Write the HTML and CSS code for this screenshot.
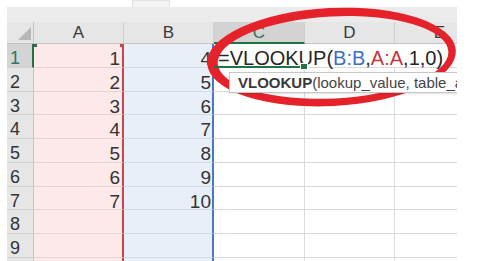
FILE: index.html
```html
<!DOCTYPE html>
<html>
<head>
<meta charset="utf-8">
<link rel="stylesheet" href="styles.css">
</head>
<body>
<div class="tabs"><div class="tab"></div></div>
<div class="sheet">
  <div class="band"></div>
  <div class="grid">
    <div class="hd corner"><span class="tri"></span></div>
    <div class="hd col">A</div>
    <div class="hd col">B</div>
    <div class="hd col sel">C</div>
    <div class="hd col">D</div>
    <div class="hd col">E</div>

    <div class="rh sel">1</div>
    <div class="c a"><span class="mk-dark"></span><span class="mk-red"></span>1</div>
    <div class="c b">4</div>
    <div class="c active"><span class="formula">=VLOOKUP(<span class="rb">B:B</span>,<span class="rr">A:A</span>,1,0)</span><span class="handle"></span></div>
    <div class="c open"></div>
    <div class="c open"></div>

    <div class="rh">2</div><div class="c a">2</div><div class="c b">5</div><div class="c"></div><div class="c"></div><div class="c"></div>
    <div class="rh">3</div><div class="c a">3</div><div class="c b">6</div><div class="c"></div><div class="c"></div><div class="c"></div>
    <div class="rh">4</div><div class="c a">4</div><div class="c b">7</div><div class="c"></div><div class="c"></div><div class="c"></div>
    <div class="rh">5</div><div class="c a">5</div><div class="c b">8</div><div class="c"></div><div class="c"></div><div class="c"></div>
    <div class="rh">6</div><div class="c a">6</div><div class="c b">9</div><div class="c"></div><div class="c"></div><div class="c"></div>
    <div class="rh">7</div><div class="c a">7</div><div class="c b">10</div><div class="c"></div><div class="c"></div><div class="c"></div>
    <div class="rh">8</div><div class="c a"></div><div class="c b"></div><div class="c"></div><div class="c"></div><div class="c"></div>
    <div class="rh">9</div><div class="c a"></div><div class="c b"></div><div class="c"></div><div class="c"></div><div class="c"></div>
    <div class="rh"></div><div class="c a"></div><div class="c b"></div><div class="c"></div><div class="c"></div><div class="c"></div>
  </div>
  <div class="tooltip"><b>VLOOKUP</b>(lookup_value, table_array, col_index_num, [range_lookup])</div>
</div>
<svg class="ring" width="478" height="261" viewBox="0 0 478 261">
  <path fill="#e5222a" fill-rule="evenodd" transform="rotate(-3 332 57)"
    d="M207,57 a124.5,49 0 1,0 249,0 a124.5,49 0 1,0 -249,0 Z M217.5,57.5 a115.5,41 0 1,0 231,0 a115.5,41 0 1,0 -231,0 Z"/>
</svg>
</body>
</html>
```

FILE: styles.css
```css
html, body {
  margin: 0;
  padding: 0;
  background: #ffffff;
}
body {
  position: relative;
  width: 478px;
  height: 261px;
  overflow: hidden;
  font-family: "Liberation Sans", Arial, sans-serif;
  color: #333333;
}
.tabs {
  height: 7px;
  padding-left: 132px;
  box-sizing: border-box;
}
.tab {
  width: 38px;
  height: 7px;
  box-sizing: border-box;
  background: #f3f3f3;
  border: 1px solid #e2e2e2;
  border-bottom: none;
}
.sheet {
  position: relative;
  margin-left: 7px;
  width: 450px;
  height: 254px;
  overflow: hidden;
  background: #ffffff;
}
.band {
  height: 15px;
  background: #ebebeb;
}
.grid {
  display: grid;
  grid-template-columns: 27px 90px 90px 91px 90px 90px;
  grid-template-rows: 22px repeat(10, 23.75px);
}
.grid > div {
  box-sizing: border-box;
  position: relative;
  white-space: nowrap;
}
.hd {
  background: #e6e6e6;
  border-bottom: 1px solid #c4c4c4;
  border-right: 1px solid #cfcfcf;
  font-size: 17px;
  line-height: 20px;
  padding-top: 1px;
  text-align: center;
  color: #3a3a3a;
}
.hd.sel {
  background: #d3d3d3;
  border-bottom: 2px solid #217346;
  color: #2d7552;
}
.corner {
  border-right: 1px solid #c4c4c4;
}
.tri {
  position: absolute;
  right: 2px;
  bottom: 3px;
  width: 13px;
  height: 13px;
  background: #b7b7b7;
  clip-path: polygon(100% 0, 100% 100%, 0 100%);
}
.rh {
  background: #e6e6e6;
  border-right: 1px solid #c4c4c4;
  border-bottom: 1px solid #d0d0d0;
  font-size: 18px;
  line-height: 23px;
  padding-top: 3px;
  padding-left: 3px;
  color: #333333;
}
.rh.sel {
  background: #d4d4d4;
  border-right: 2px solid #217346;
  color: #1f7a6a;
}
.c {
  border-right: 1px solid #dadada;
  border-bottom: 1px solid #dadada;
  font-size: 19px;
  line-height: 23px;
  padding-top: 3px;
  text-align: right;
  color: #333333;
}
.c.a {
  background: #fde9e9;
  border-right: 2px solid #c8464c;
  border-bottom-color: #e3d3d3;
  padding-right: 2px;
}
.c.b {
  background: #e9eff9;
  border-right: 2px solid #4a78c6;
  border-bottom-color: #d4dbe6;
  padding-right: 1px;
}
.c.active {
  text-align: left;
  border-right: none;
  border-bottom: 2px solid #217346;
  padding-left: 4px;
  padding-top: 2.5px;
  font-size: 20px;
  color: #262626;
  z-index: 2;
  overflow: visible;
}
.c.open {
  border-right: none;
  background: transparent;
}
.formula {
  position: relative;
}
.rb { color: #3d6fc6; }
.rr { color: #c4363c; }
.handle {
  position: absolute;
  right: -3px;
  bottom: -4px;
  width: 6px;
  height: 5px;
  background: #217346;
  border: 1px solid #ffffff;
  box-sizing: content-box;
}
.mk-dark {
  position: absolute;
  left: 0;
  top: 0;
  width: 3px;
  height: 3px;
  background: #4d5a52;
}
.mk-red {
  position: absolute;
  right: -3px;
  top: 0;
  width: 5px;
  height: 3px;
  background: #c8464c;
}
.tooltip {
  position: absolute;
  left: 222px;
  top: 65px;
  height: 21px;
  box-sizing: border-box;
  padding: 0 8px;
  background: #ffffff;
  border: 1px solid #c6c6c6;
  box-shadow: 1px 1px 2px rgba(0,0,0,0.12);
  font-size: 15px;
  line-height: 19px;
  color: #444444;
  white-space: nowrap;
  z-index: 3;
}
.tooltip b {
  color: #3a3a3a;
}
.ring {
  position: absolute;
  left: 0;
  top: 0;
  pointer-events: none;
}
```
